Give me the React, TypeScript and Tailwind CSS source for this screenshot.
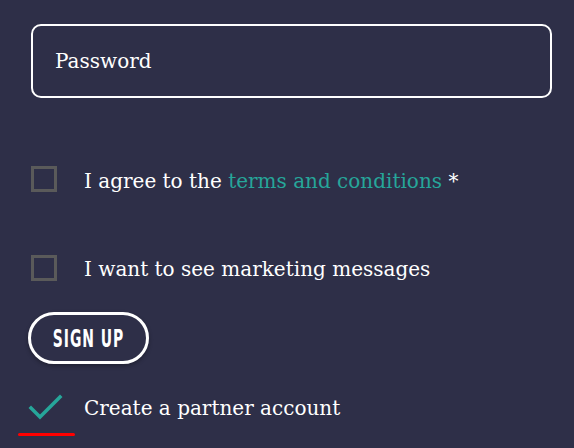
import React from "react";

export default function App() {
  const serif = { fontFamily: '"DejaVu Serif", "Liberation Serif", serif' };
  return (
    <div className="w-[574px] h-[448px] bg-[#2e2f48] overflow-hidden text-white" style={serif}>
      <div className="pl-[31px] pr-[22px] pt-[24px]">
        <div className="h-[74px] rounded-[10px] border-2 border-white flex items-center pl-[22px] text-[20px]">
          Password
        </div>
      </div>
      <div className="pl-[31px] mt-[68px] flex items-center h-[26px]">
        <div className="w-[26px] h-[26px] border-[3px] border-[#5a5a5a]" />
        <div className="ml-[27px] text-[20px] leading-none pt-[3px]">
          I agree to the <span className="text-[#26a69a]">terms and conditions</span> *
        </div>
      </div>
      <div className="pl-[31px] mt-[63px] flex items-center h-[26px]">
        <div className="w-[26px] h-[26px] border-[3px] border-[#5a5a5a]" />
        <div className="ml-[27px] text-[20px] leading-none pt-[1px]">I want to see marketing messages</div>
      </div>
      <div className="pl-[28px] mt-[31px]">
        <button
          className="w-[121px] h-[52px] rounded-full border-[3px] border-white flex items-center justify-center text-white shadow-[0_2px_4px_rgba(0,0,0,0.3)]"
          style={{ fontFamily: '"DejaVu Sans Condensed", "DejaVu Sans", sans-serif' }}
        >
          <span className="inline-block text-[25px] font-bold tracking-[1.5px] scale-x-[0.62] whitespace-nowrap leading-none">
            SIGN UP
          </span>
        </button>
      </div>
      <div className="mt-[28px] flex items-center relative h-[32px]">
        <div className="w-[84px] flex pl-[28px]">
          <svg width="36" height="28" viewBox="0 0 36 28">
            <path d="M3 14 L12 23 L32 3" fill="none" stroke="#26a69a" strokeWidth="3.5" strokeLinecap="square" />
          </svg>
        </div>
        <div className="text-[20px] leading-none">Create a partner account</div>
        <div className="absolute left-[18px] top-[41px] w-[57px] h-[3px] bg-[#ff0000] rounded-full" />
      </div>
    </div>
  );
}
